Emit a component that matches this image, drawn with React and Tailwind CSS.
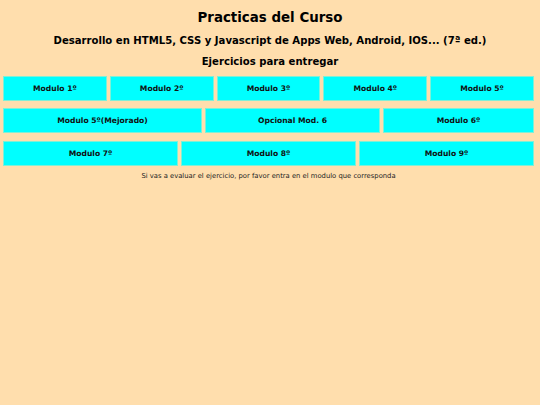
import React from "react";

const Btn = ({ children, className = "" }) => (
  <div className={"bg-[#00ffff] border border-[#7ff0d6] h-[25px] flex items-center justify-center text-[7.6px] font-bold text-[#111] " + className}>
    {children}
  </div>
);

export default function App() {
  return (
    <div className="w-[540px] h-[405px] bg-[#ffdead] font-['DejaVu_Sans',Verdana,sans-serif] text-black overflow-hidden">
      <div className="pt-[9px] flex flex-col items-center">
        <h1 className="text-[13.4px] font-bold leading-[18px]">Practicas del Curso</h1>
        <h2 className="mt-[7px] text-[10.1px] font-bold leading-[14px]">Desarrollo en HTML5, CSS y Javascript de Apps Web, Android, IOS... (7ª ed.)</h2>
        <h3 className="mt-[7px] text-[10.1px] font-bold leading-[14px]">Ejercicios para entregar</h3>
      </div>
      <div className="mx-[3px] w-[531px] mt-[7px] flex flex-col">
        <div className="flex gap-[3px]">
          <Btn className="flex-1">Modulo 1º</Btn>
          <Btn className="flex-1">Modulo 2º</Btn>
          <Btn className="flex-1">Modulo 3º</Btn>
          <Btn className="flex-1">Modulo 4º</Btn>
          <Btn className="flex-1">Modulo 5º</Btn>
        </div>
        <div className="flex gap-[3px] mt-[7px]">
          <Btn className="w-[199px]">Modulo 5º(Mejorado)</Btn>
          <Btn className="w-[175px]">Opcional Mod. 6</Btn>
          <Btn className="flex-1">Modulo 6º</Btn>
        </div>
        <div className="flex gap-[3px] mt-[8px]">
          <Btn className="flex-1">Modulo 7º</Btn>
          <Btn className="flex-1">Modulo 8º</Btn>
          <Btn className="flex-1">Modulo 9º</Btn>
        </div>
        <p className="mt-[6px] text-center text-[6.8px] leading-[9px] text-[#222]">Si vas a evaluar el ejercicio, por favor entra en el modulo que corresponda</p>
      </div>
    </div>
  );
}
